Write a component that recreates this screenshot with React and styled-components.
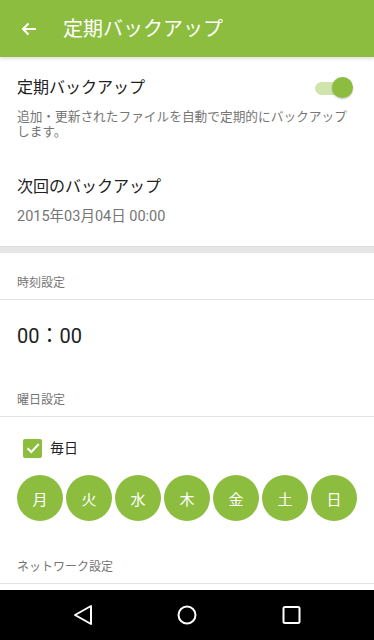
import React from "react";
import styled, { createGlobalStyle } from "styled-components";

const GREEN = "#8cbd3f";

const GlobalStyle = createGlobalStyle`
  html, body {
    margin: 0;
    padding: 0;
    background: #fff;
  }
  body {
    font-family: "Roboto", "Noto Sans CJK JP", sans-serif;
    color: #212121;
  }
  * {
    box-sizing: border-box;
  }
`;

const Screen = styled.div`
  height: 100vh;
  display: flex;
  flex-direction: column;
  overflow: hidden;
`;

const AppBar = styled.header`
  height: 57px;
  flex-shrink: 0;
  background: ${GREEN};
  display: flex;
  align-items: center;
  padding-left: 21px;
  gap: 26px;
  color: #fff;
  position: relative;
  z-index: 1;
  box-shadow: 0 2px 3px rgba(0, 0, 0, 0.12);
`;

const Title = styled.h1`
  margin: 0;
  font-size: 20px;
  font-weight: 400;
  line-height: 24px;
`;

const Content = styled.main`
  flex: 1;
  overflow: hidden;
`;

const Block = styled.section`
  padding: ${(p) => p.$pad || "0 17px"};
`;

const SwitchRow = styled.div`
  display: flex;
  align-items: center;
  justify-content: space-between;
  padding-right: 4px;
`;

const PrimaryText = styled.div`
  font-size: 16px;
  line-height: 20px;
`;

const SecondaryText = styled.div`
  margin-top: ${(p) => p.$top || "0"};
  font-size: ${(p) => p.$size || "12.7px"};
  line-height: ${(p) => p.$lh || "15px"};
  color: #757575;
`;

const Toggle = styled.div`
  position: relative;
  width: 38px;
  height: 22px;
  display: flex;
  align-items: center;
`;

const Track = styled.div`
  width: 34px;
  height: 13px;
  border-radius: 7px;
  background: #cfe5ad;
`;

const Thumb = styled.div`
  position: absolute;
  right: 0;
  top: 0;
  width: 21px;
  height: 21px;
  border-radius: 50%;
  background: ${GREEN};
  box-shadow: 0 1px 2px rgba(0, 0, 0, 0.25);
`;

const Band = styled.div`
  height: 7px;
  background: #e6e6e6;
  border-top: 1px solid #dcdcdc;
`;

const SubHeader = styled.div`
  padding: ${(p) => p.$top} 17px 8px;
  font-size: 12px;
  line-height: 16px;
  color: #757575;
  border-bottom: 1px solid #e2e2e2;
`;

const TimeText = styled.div`
  padding: 24px 17px 0;
  font-size: 20px;
  line-height: 24px;
`;

const CheckRow = styled.label`
  display: flex;
  align-items: center;
  gap: 8px;
  padding: 21px 0 0 23px;
  font-size: 14px;
  line-height: 20px;
`;

const CheckBox = styled.span`
  width: 19px;
  height: 19px;
  border-radius: 2px;
  background: ${GREEN};
  display: flex;
  align-items: center;
  justify-content: center;
`;

const DayRow = styled.div`
  display: flex;
  justify-content: space-between;
  margin: 17px 17px 0;
`;

const Day = styled.div`
  width: 46px;
  height: 46px;
  border-radius: 50%;
  background: ${GREEN};
  color: #fff;
  font-size: 15px;
  display: flex;
  align-items: center;
  justify-content: center;
`;

const NavBar = styled.nav`
  height: 50px;
  flex-shrink: 0;
  background: #000;
  display: flex;
  justify-content: center;
  align-items: center;
`;

const NavButton = styled.div`
  width: 104px;
  display: flex;
  justify-content: center;
  align-items: center;
`;

const days = ["月", "火", "水", "木", "金", "土", "日"];

export default function App() {
  return (
    <Screen>
      <GlobalStyle />
      <AppBar>
        <svg width="16" height="14" viewBox="0 0 16 14" fill="none">
          <path d="M15 7H2M7.5 1.5L2 7l5.5 5.5" stroke="#fff" strokeWidth="2" />
        </svg>
        <Title>定期バックアップ</Title>
      </AppBar>
      <Content>
        <Block $pad="20px 17px 0">
          <SwitchRow>
            <PrimaryText>定期バックアップ</PrimaryText>
            <Toggle>
              <Track />
              <Thumb />
            </Toggle>
          </SwitchRow>
          <SecondaryText $top="10px">
            追加・更新されたファイルを自動で定期的にバックアップします。
          </SecondaryText>
        </Block>
        <Block $pad="38px 17px 20px">
          <PrimaryText>次回のバックアップ</PrimaryText>
          <SecondaryText $top="11px" $size="14.5px" $lh="18px">
            2015年03月04日 00:00
          </SecondaryText>
        </Block>
        <Band />
        <SubHeader $top="22px">時刻設定</SubHeader>
        <TimeText>00：00</TimeText>
        <SubHeader $top="44px">曜日設定</SubHeader>
        <CheckRow>
          <CheckBox>
            <svg width="14" height="12" viewBox="0 0 14 12" fill="none">
              <path d="M1.5 6.2l3.8 3.8L12.8 2" stroke="#fff" strokeWidth="2" />
            </svg>
          </CheckBox>
          毎日
        </CheckRow>
        <DayRow>
          {days.map((d) => (
            <Day key={d}>{d}</Day>
          ))}
        </DayRow>
        <SubHeader $top="38px">ネットワーク設定</SubHeader>
      </Content>
      <NavBar>
        <NavButton>
          <svg width="20" height="22" viewBox="0 0 20 22" fill="none">
            <path d="M18 2v18L2 11z" stroke="#fff" strokeWidth="2" strokeLinejoin="round" />
          </svg>
        </NavButton>
        <NavButton>
          <svg width="20" height="20" viewBox="0 0 20 20" fill="none">
            <circle cx="10" cy="10" r="8.5" stroke="#fff" strokeWidth="2" />
          </svg>
        </NavButton>
        <NavButton>
          <svg width="19" height="18" viewBox="0 0 19 18" fill="none">
            <rect x="1.5" y="1" width="16" height="16" rx="1.5" stroke="#fff" strokeWidth="2" />
          </svg>
        </NavButton>
      </NavBar>
    </Screen>
  );
}
